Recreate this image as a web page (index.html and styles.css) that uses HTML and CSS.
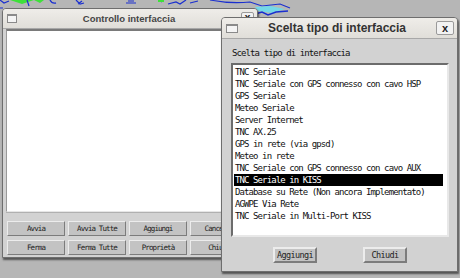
FILE: index.html
```html
<!DOCTYPE html>
<html lang="it">
<head>
  <meta charset="UTF-8">
  <title>Scelta tipo di interfaccia</title>
  <link rel="stylesheet" href="styles.css">
</head>
<body>
  <div class="desktop">
    <svg class="map" width="460" height="24" viewBox="0 0 460 24">
      <path d="M0 0 L4 3 L9 1" stroke="#1a2fd0" stroke-width="1.2" fill="none"/>
      <path d="M10 0 L22 4 L34 0 L40 3 L44 0 Z" fill="#3ee03a"/>
      <path d="M27 0 L29 6" stroke="#1a2fd0" stroke-width="1.2" fill="none"/>
      <path d="M50 0 Q52 4 56 3" stroke="#1a2fd0" stroke-width="1.3" fill="none"/>
      <path d="M76 0 L80 4 L84 3 M78 4 L82 1" stroke="#1a2fd0" stroke-width="1.2" fill="none"/>
      <path d="M126 3 L136 3 M128 1 L134 1" stroke="#1a2fd0" stroke-width="1" fill="none"/>
      <path d="M160 0 L162 2 M168 4 L176 2 L180 4 L186 0 M190 3 L198 1" stroke="#1a2fd0" stroke-width="1.2" fill="none"/>
      <path d="M158 1 L164 1" stroke="#3ee03a" stroke-width="2"/>
      <path d="M210 0 Q230 4 250 2 L262 6 L280 4 L290 8" stroke="#1a2fd0" stroke-width="1.2" fill="none"/>
      <path d="M255 7 L270 6 L285 9 L272 13 L258 11 Z" fill="#74d8e8"/>
      <path d="M255 14 L262 12 L268 15 L276 12 L288 11" stroke="#1a2fd0" stroke-width="1.4" fill="none"/>
      <path d="M0 8 L3 8 M0 40 L2 40" stroke="#1a2fd0" stroke-width="1"/>
    </svg>

    <div class="window back">
      <div class="titlebar">
        <span class="wicon"></span>
        <span class="title">Controllo interfaccia</span>
        <span class="close">x</span>
      </div>
      <div class="body">
        <div class="canvas"></div>
        <div class="buttons">
          <button class="btn">Avvia</button>
          <button class="btn">Avvia Tutte</button>
          <button class="btn">Aggiungi</button>
          <button class="btn">Cancella</button>
          <button class="btn">Ferma</button>
          <button class="btn">Ferma Tutte</button>
          <button class="btn">Proprietà</button>
          <button class="btn">Chiudi</button>
        </div>
      </div>
    </div>

    <div class="window front">
      <div class="titlebar">
        <span class="wicon"></span>
        <span class="title">Scelta tipo di interfaccia</span>
        <span class="close">x</span>
      </div>
      <div class="body">
        <div class="label">Scelta tipo di interfaccia</div>
        <ul class="listbox">
          <li>TNC Seriale</li>
          <li>TNC Seriale con GPS connesso con cavo HSP</li>
          <li>GPS Seriale</li>
          <li>Meteo Seriale</li>
          <li>Server Internet</li>
          <li>TNC AX.25</li>
          <li>GPS in rete (via gpsd)</li>
          <li>Meteo in rete</li>
          <li>TNC Seriale con GPS connesso con cavo AUX</li>
          <li class="selected">TNC Seriale in KISS</li>
          <li>Database su Rete (Non ancora Implementato)</li>
          <li>AGWPE Via Rete</li>
          <li>TNC Seriale in Multi-Port KISS</li>
        </ul>
        <div class="actions">
          <button class="btn big">Aggiungi</button>
          <button class="btn big">Chiudi</button>
        </div>
      </div>
    </div>
  </div>
</body>
</html>
```

FILE: styles.css
```css
body {
  margin: 0;
  background: #b6b6b6;
  font-family: "DejaVu Sans Mono", "Liberation Mono", monospace;
  overflow: hidden;
}

.desktop {
  position: relative;
  width: 460px;
  height: 278px;
}

.map {
  position: absolute;
  left: 0;
  top: 0;
}

.window {
  position: absolute;
  display: flex;
  flex-direction: column;
  box-sizing: border-box;
  background: #d2d2d2;
  border: 1px solid #6e6e6e;
  border-radius: 4px 4px 0 0;
  box-shadow: 1px 2px 2px rgba(0, 0, 0, 0.55);
}

.window.back {
  left: 2px;
  top: 8px;
  width: 256px;
  height: 250px;
}

.window.front {
  left: 221px;
  top: 17px;
  width: 237px;
  height: 255px;
}

.titlebar {
  display: flex;
  align-items: center;
  height: 19px;
  padding: 0 3px 0 4px;
  background: linear-gradient(#efede9, #e0ded9);
  border-bottom: 1px solid #a8a8a8;
  border-radius: 3px 3px 0 0;
  flex-shrink: 0;
}

.front .titlebar {
  height: 20px;
}

.wicon {
  width: 8px;
  height: 6px;
  border: 1px solid #8a8a8a;
  border-top-width: 2px;
  background: #f4f4f4;
}

.front .wicon {
  width: 10px;
  height: 6px;
}

.title {
  flex: 1;
  text-align: center;
  font-family: "Liberation Sans", Arial, sans-serif;
  font-weight: bold;
  font-size: 9.5px;
  color: #454545;
}

.front .title {
  font-size: 12px;
  color: #333;
}

.close {
  width: 11px;
  height: 11px;
  line-height: 10px;
  text-align: center;
  font-family: "Liberation Sans", Arial, sans-serif;
  font-weight: bold;
  font-size: 10px;
  color: #222;
  border: 1px solid #9a9a9a;
  border-radius: 2px;
  background: #f2f2f2;
}

.front .close {
  width: 16px;
  height: 12px;
  line-height: 12px;
  font-size: 11px;
}

.back .body {
  flex: 1;
  display: flex;
  flex-direction: column;
  padding: 0 3px 2px 3px;
}

.canvas {
  flex: 1;
  background: #fff;
  border-top: 2px solid #7a7a7a;
  border-left: 1px solid #9a9a9a;
  border-bottom: 1px solid #e6e6e6;
}

.buttons {
  display: grid;
  grid-template-columns: repeat(4, 58px);
  grid-auto-rows: 15px;
  gap: 4px 3px;
  padding: 8px 0 0 1px;
  border-top: 1px solid #b0b0b0;
}

.btn {
  margin: 0;
  padding: 0;
  background: #c3c3c3;
  border: 1px solid;
  border-color: #ececec #7c7c7c #7c7c7c #ececec;
  font-family: "DejaVu Sans Mono", "Liberation Mono", monospace;
  font-size: 7.5px;
  letter-spacing: -0.9px;
  color: #222;
  white-space: nowrap;
  overflow: hidden;
}

.front .body {
  flex: 1;
  display: flex;
  flex-direction: column;
  padding: 0 8px 0 9px;
}

.label {
  font-size: 9px;
  letter-spacing: -0.9px;
  color: #111;
  padding: 9px 0 0 1px;
  height: 15px;
}

.listbox {
  list-style: none;
  margin: 0;
  padding: 1px 4px 0 1px;
  height: 174px;
  box-sizing: border-box;
  background: #fff;
  border: 2px solid;
  border-color: #6c6c6c #e8e8e8 #e8e8e8 #6c6c6c;
  font-size: 9px;
  letter-spacing: -0.9px;
  color: #111;
}

.listbox li {
  height: 12px;
  line-height: 12px;
  padding-left: 1px;
  white-space: nowrap;
}

.listbox li.selected {
  background: #000;
  color: #fff;
}

.actions {
  display: flex;
  justify-content: center;
  gap: 46px;
  padding: 10px 0 0 0;
}

.btn.big {
  width: 44px;
  height: 16px;
  padding: 0;
  font-size: 8.5px;
  letter-spacing: -0.6px;
  border-width: 2px;
}
```
